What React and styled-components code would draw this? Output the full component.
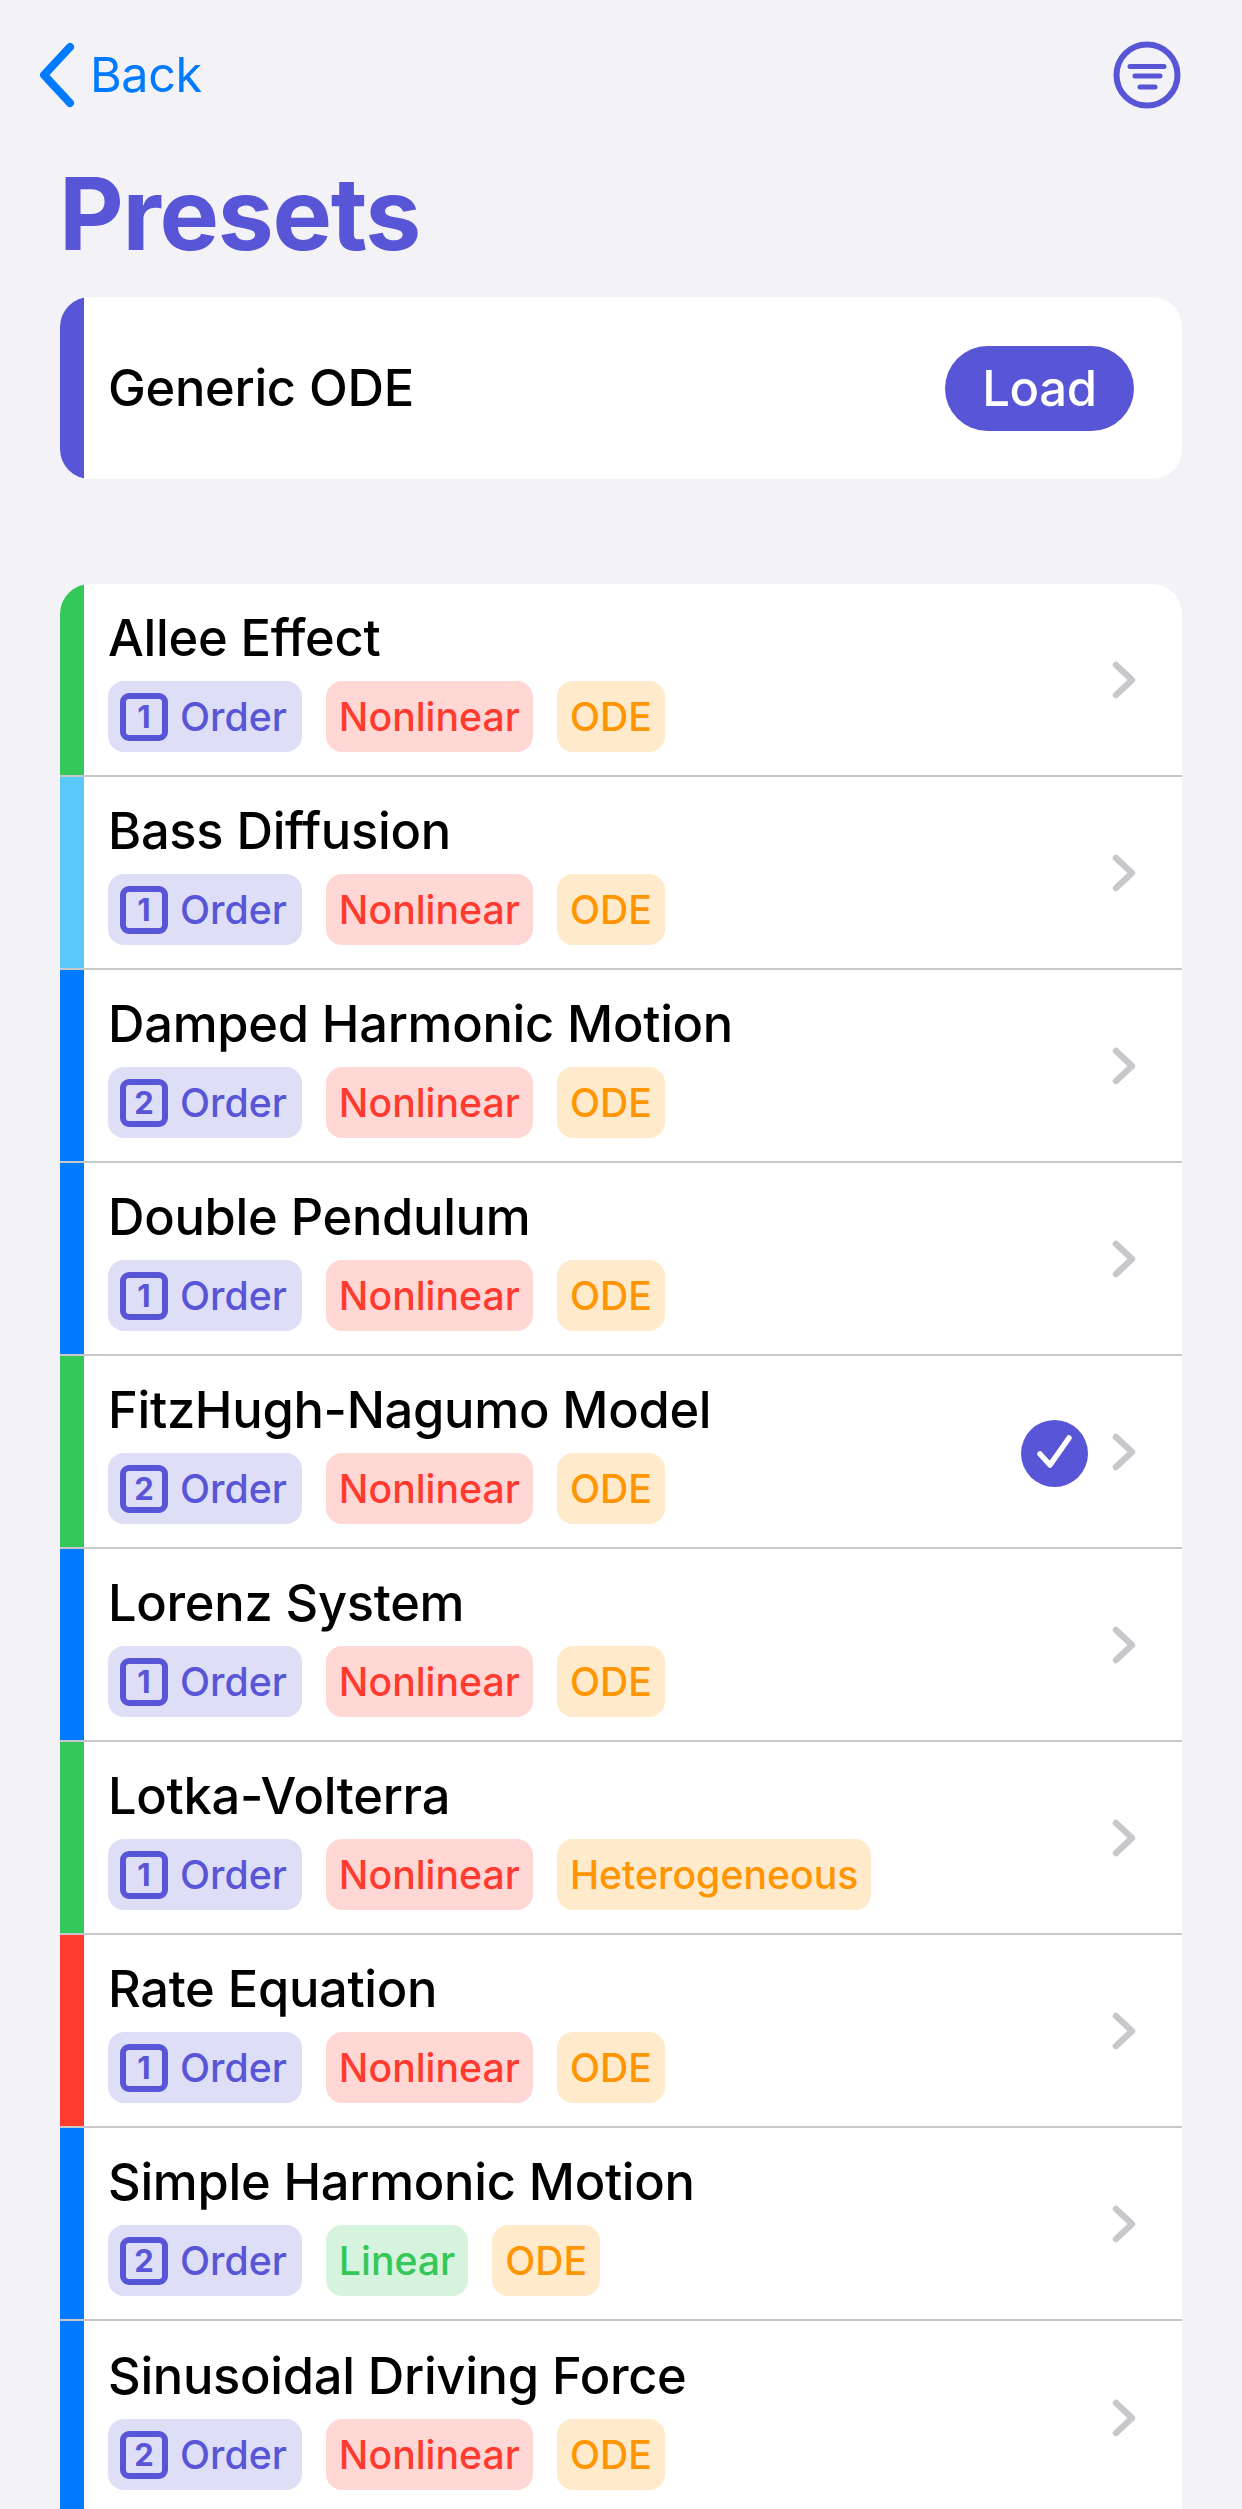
import React from 'react';
import styled, { createGlobalStyle } from 'styled-components';

const INDIGO = '#5856d6';
const BLUE = '#007aff';
const GREEN = '#34c759';
const TEAL = '#5ac8fa';
const RED = '#ff3b30';
const ORANGE = '#ff9500';

const GlobalStyle = createGlobalStyle`
    html, body {
        margin: 0;
        padding: 0;
        height: 2509px;
        overflow: hidden;
        background-color: #f2f2f7;
        font-family: Inter, 'Noto Sans', sans-serif;
    }
`;

const Page = styled.div`
    width: 1242px;
    height: 2509px;
    overflow: hidden;
    box-sizing: border-box;
    background-color: #f2f2f7;
`;

const TopBar = styled.div`
    display: flex;
    justify-content: space-between;
    align-items: center;
    height: 66px;
    padding: 42px 61px 0 38px;
`;

const BackLink = styled.a`
    display: flex;
    align-items: center;
    gap: 14px;
    color: ${BLUE};
    font-size: 48.5px;
    line-height: 66px;
    letter-spacing: -0.4px;
`;

const Title = styled.h1`
    margin: 49px 0 26px 59px;
    height: 114px;
    color: ${INDIGO};
    font-size: 100px;
    font-weight: 700;
    line-height: 114px;
    letter-spacing: -1.3px;
`;

const Card = styled.div`
    margin: ${props => props.marginTop}px 60px 0;
    width: 1122px;
    background-color: #fff;
    border-radius: 30px ${props => props.flatBottom ? '30px 0 0' : '30px 30px 30px'};
    overflow: hidden;
`;

const Row = styled.div`
    display: flex;
    height: ${props => props.height}px;
    box-sizing: border-box;
    border-bottom: ${props => props.divided ? '2px solid #c8c8ca' : 'none'};
`;

const Strip = styled.div`
    flex: none;
    width: 24px;
    background-color: ${props => props.color};
`;

const RowBody = styled.div`
    flex: 1;
    display: flex;
    align-items: center;
    padding-left: 24px;
    padding-right: ${props => props.paddingRight}px;
`;

const RowText = styled.div`
    flex: 1;
    display: flex;
    flex-direction: column;
    gap: 13px;
    padding-top: 1px;
`;

const Name = styled.div`
    flex: ${props => props.grow ? 1 : 'none'};
    color: #000;
    font-size: 50.6px;
    font-weight: 550;
    line-height: 60px;
    letter-spacing: -0.3px;
`;

const Chips = styled.div`
    display: flex;
    gap: 24px;
`;

const Chip = styled.div`
    display: flex;
    align-items: center;
    gap: 12px;
    height: 71px;
    padding: ${props => props.order ? '0 15px 0 12px' : '0 13px'};
    border-radius: 16px;
    color: ${props => props.color};
    background-color: ${props => props.bg};
    font-size: 39.2px;
    font-weight: 500;
    line-height: 71px;
`;

const OrderBox = styled.span`
    display: flex;
    justify-content: center;
    align-items: center;
    width: 48px;
    height: 48px;
    box-sizing: border-box;
    border: 6px solid ${INDIGO};
    border-radius: 9px;
    font-size: 31px;
    font-weight: 700;
    line-height: 1;
`;

const LoadButton = styled.button`
    width: 189px;
    height: 85px;
    padding: 0;
    border: none;
    border-radius: 43px;
    color: #fff;
    background-color: ${INDIGO};
    font-family: inherit;
    font-size: 49px;
    font-weight: 550;
    letter-spacing: -0.3px;
`;

const Selected = styled.span`
    display: flex;
    justify-content: center;
    align-items: center;
    width: 67px;
    height: 67px;
    margin: 3px 24px 0 0;
    border-radius: 50%;
    background-color: ${INDIGO};
`;

const presets = [
    { name: 'Allee Effect', color: GREEN, order: 1 },
    { name: 'Bass Diffusion', color: TEAL, order: 1 },
    { name: 'Damped Harmonic Motion', color: BLUE, order: 2 },
    { name: 'Double Pendulum', color: BLUE, order: 1 },
    { name: 'FitzHugh-Nagumo Model', color: GREEN, order: 2, selected: true },
    { name: 'Lorenz System', color: BLUE, order: 1 },
    { name: 'Lotka-Volterra', color: GREEN, order: 1, kind: 'Heterogeneous' },
    { name: 'Rate Equation', color: RED, order: 1 },
    { name: 'Simple Harmonic Motion', color: BLUE, order: 2, linear: true },
    { name: 'Sinusoidal Driving Force', color: BLUE, order: 2 },
];

const BackChevron = () => (
    <svg width="38" height="66" viewBox="0 0 38 66" fill="none">
        <path d="M32 5 L6 33 L32 61" stroke={BLUE} strokeWidth="8" strokeLinecap="round" strokeLinejoin="round" />
    </svg>
);

const FilterIcon = () => (
    <svg width="68" height="68" viewBox="0 0 68 68" fill="none" stroke={INDIGO} strokeLinecap="round">
        <circle cx="34" cy="34" r="30.5" strokeWidth="6" />
        <path d="M17 25.5 H51 M22 35 H47 M27 46 H42" strokeWidth="5" />
    </svg>
);

const RowChevron = () => (
    <svg width="24" height="38" viewBox="0 0 24 38" fill="none">
        <path d="M4 4 L20 19 L4 34" stroke="#c7c7cc" strokeWidth="6.5" strokeLinecap="round" strokeLinejoin="round" />
    </svg>
);

const CheckMark = () => (
    <svg width="36" height="36" viewBox="0 0 36 36" fill="none">
        <path d="M3 19 L13 30 L32 3" stroke="#fff" strokeWidth="5.5" strokeLinecap="round" strokeLinejoin="round" />
    </svg>
);

const PresetRow = ({ preset, divided }) => (
    <Row height={193} divided={divided}>
        <Strip color={preset.color} />
        <RowBody paddingRight={46}>
            <RowText>
                <Name>{preset.name}</Name>
                <Chips>
                    <Chip order color={INDIGO} bg="#dedef7">
                        <OrderBox>{preset.order}</OrderBox>
                        Order
                    </Chip>
                    {preset.linear
                        ? <Chip color={GREEN} bg="#d6f4dd">Linear</Chip>
                        : <Chip color={RED} bg="#ffd8d6">Nonlinear</Chip>}
                    <Chip color={ORANGE} bg="#ffeacc">{preset.kind || 'ODE'}</Chip>
                </Chips>
            </RowText>
            {preset.selected && <Selected><CheckMark /></Selected>}
            <RowChevron />
        </RowBody>
    </Row>
);

export default function App() {
    return (
        <Page>
            <GlobalStyle />
            <TopBar>
                <BackLink><BackChevron />Back</BackLink>
                <FilterIcon />
            </TopBar>
            <Title>Presets</Title>
            <Card marginTop={0}>
                <Row height={182}>
                    <Strip color={INDIGO} />
                    <RowBody paddingRight={48}>
                        <Name grow>Generic ODE</Name>
                        <LoadButton>Load</LoadButton>
                    </RowBody>
                </Row>
            </Card>
            <Card marginTop={105} flatBottom>
                {presets.map((preset, i) => (
                    <PresetRow key={preset.name} preset={preset} divided={i < presets.length - 1} />
                ))}
            </Card>
        </Page>
    );
}
